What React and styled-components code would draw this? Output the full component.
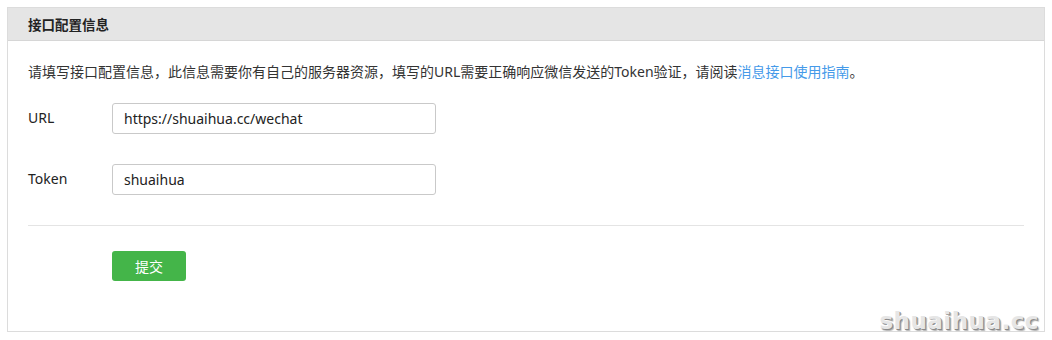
import React from "react";
import styled, { createGlobalStyle } from "styled-components";

const Global = createGlobalStyle`
  html, body { margin: 0; padding: 0; background: #fff; }
  body {
    font-family: "Noto Sans", "Noto Sans CJK SC", sans-serif;
    color: #222;
  }
  * { box-sizing: border-box; }
`;

const Page = styled.div`
  position: relative;
  width: 1052px;
  height: 340px;
  padding: 7px 0 0 7px;
`;

const Panel = styled.section`
  width: 1038px;
  height: 325px;
  border: 1px solid #dcdcdc;
  background: #fff;
`;

const PanelHeader = styled.header`
  height: 33px;
  background: #e5e5e5;
  border-bottom: 1px solid #d6d6d6;
  display: flex;
  align-items: center;
  padding: 0 20px;
`;

const Title = styled.h3`
  margin: 0;
  font-size: 13.5px;
  font-weight: 700;
  color: #222;
`;

const Body = styled.div`
  padding: 21px 20px 0;
`;

const Desc = styled.p`
  margin: 0;
  font-size: 14px;
  line-height: 20px;
  color: #333;
`;

const Link = styled.a`
  color: #459ae9;
  text-decoration: none;
`;

const Form = styled.div`
  display: flex;
  flex-direction: column;
  gap: 30px;
  margin-top: 21px;
`;

const Row = styled.div`
  display: flex;
  align-items: center;
`;

const Label = styled.label`
  width: 84px;
  font-size: 14px;
  line-height: 20px;
  color: #222;
  margin-top: -2px;
`;

const Input = styled.input`
  width: 324px;
  height: 31px;
  border: 1px solid #c9c9c9;
  border-radius: 3px;
  padding: 0 11px;
  font-family: inherit;
  font-size: 14px;
  color: #222;
  outline: none;
`;

const Divider = styled.hr`
  margin: 30px 0 0;
  border: 0;
  border-top: 1px solid #e4e4e4;
`;

const Actions = styled.div`
  padding: 25px 0 0 84px;
`;

const Button = styled.button`
  width: 74px;
  height: 30px;
  border: 0;
  border-radius: 3px;
  background: #44b549;
  color: #fff;
  font-family: inherit;
  font-size: 14px;
  cursor: pointer;
`;

const Watermark = styled.div`
  position: absolute;
  right: 13px;
  bottom: 6px;
  font-family: "DejaVu Sans", sans-serif;
  font-weight: 700;
  font-size: 23px;
  letter-spacing: 0.5px;
  color: #e6e6e6;
  text-shadow: -1px -1px 0 #fff, 1px 1px 0 #8a8a8a, 2px 2px 1px #b5b5b5;
  pointer-events: none;
`;

export default function App() {
  return (
    <Page>
      <Global />
      <Panel>
        <PanelHeader>
          <Title>接口配置信息</Title>
        </PanelHeader>
        <Body>
          <Desc>
            请填写接口配置信息，此信息需要你有自己的服务器资源，填写的URL需要正确响应微信发送的Token验证，请阅读
            <Link href="#">消息接口使用指南</Link>。
          </Desc>
          <Form>
            <Row>
              <Label>URL</Label>
              <Input defaultValue="https://shuaihua.cc/wechat" />
            </Row>
            <Row>
              <Label>Token</Label>
              <Input defaultValue="shuaihua" />
            </Row>
          </Form>
          <Divider />
          <Actions>
            <Button>提交</Button>
          </Actions>
        </Body>
      </Panel>
      <Watermark>shuaihua.cc</Watermark>
    </Page>
  );
}
